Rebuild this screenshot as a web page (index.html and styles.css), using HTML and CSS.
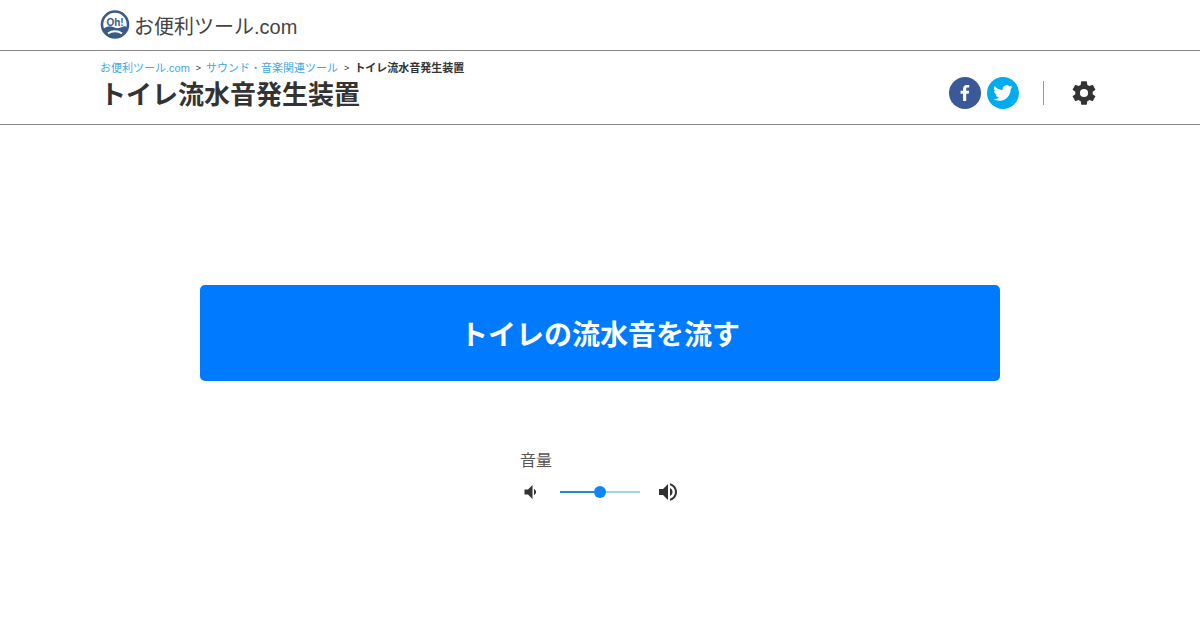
FILE: index.html
```html
<!DOCTYPE html>
<html lang="ja">
<head>
<meta charset="utf-8">
<title>トイレ流水音発生装置</title>
<link rel="stylesheet" href="styles.css">
</head>
<body>
<header class="site-header">
  <div class="wrap brand">
    <svg class="logo" width="30" height="30" viewBox="0 0 30 30" aria-hidden="true">
      <circle cx="15" cy="14.5" r="13" fill="#fff" stroke="#3a5a88" stroke-width="2.6"/>
      <path d="M3 19c4-3 7-3.500 10-2 3 1.500 6 1.500 9 0 2.500-1.200 4-1 5 .5-1 5-6 9.500-12 9.500S4.500 24 3 19z" fill="#3a5a88"/>
      <path d="M8 23.500c4-3 10-3 14 0" fill="none" stroke="#fff" stroke-width="1.800"/>
      <text x="15" y="15.500" class="logo-text">Oh!</text>
    </svg>
    <span class="brand-name">お便利ツール.com</span>
  </div>
</header>
<section class="title-bar">
  <div class="wrap title-inner">
    <div class="title-text">
      <nav class="crumbs">
        <a>お便利ツール.com</a><span class="sep">&gt;</span><a>サウンド・音楽関連ツール</a><span class="sep">&gt;</span><strong>トイレ流水音発生装置</strong>
      </nav>
      <h1>トイレ流水音発生装置</h1>
    </div>
    <div class="actions">
      <span class="social fb">
        <svg width="32" height="32" viewBox="0 0 32 32" aria-hidden="true"><path d="M17.200 24v-7.300h2.500l.4-2.900h-2.900v-1.800c0-.8.200-1.400 1.400-1.400h1.600V8c-.3 0-1.200-.1-2.300-.1-2.300 0-3.800 1.400-3.800 3.900v2h-2.500v2.900h2.500V24z" fill="#fff"/></svg>
      </span>
      <span class="social tw">
        <svg width="32" height="32" viewBox="0 0 32 32" aria-hidden="true"><path transform="translate(6.400 6.400) scale(.8)" d="M23.950 4.570a10 10 0 0 1-2.820.77 4.960 4.960 0 0 0 2.160-2.720 9.900 9.900 0 0 1-3.120 1.190 4.920 4.920 0 0 0-8.380 4.480A13.970 13.970 0 0 1 1.670 3.150a4.930 4.930 0 0 0 1.520 6.570 4.900 4.900 0 0 1-2.230-.62v.06a4.920 4.920 0 0 0 3.950 4.830 5 5 0 0 1-2.210.08 4.940 4.940 0 0 0 4.600 3.420A9.870 9.870 0 0 1 0 19.540a13.940 13.940 0 0 0 7.550 2.210c9.050 0 14-7.500 14-13.980 0-.21 0-.42-.02-.63a9.940 9.940 0 0 0 2.460-2.550z" fill="#fff"/></svg>
      </span>
      <span class="divider"></span>
      <svg class="gear" width="28" height="28" viewBox="0 0 24 24" aria-hidden="true"><path fill-rule="evenodd" d="M19.430 12.980c.04-.32.07-.64.07-.98s-.03-.66-.07-.98l2.110-1.650a.5.500 0 0 0 .12-.64l-2-3.460a.5.500 0 0 0-.61-.22l-2.490 1a7.300 7.300 0 0 0-1.690-.98l-.38-2.650A.49.490 0 0 0 14 2h-4a.49.490 0 0 0-.49.420l-.38 2.650c-.61.250-1.170.590-1.690.98l-2.490-1a.49.490 0 0 0-.61.220l-2 3.460a.49.490 0 0 0 .12.640l2.110 1.650c-.04.320-.07.650-.07.980s.03.660.07.980l-2.110 1.650a.5.500 0 0 0-.12.640l2 3.460c.12.220.39.300.61.220l2.490-1c.52.400 1.080.730 1.690.98l.38 2.650c.03.240.24.420.49.420h4c.25 0 .46-.18.490-.42l.38-2.650c.61-.25 1.170-.59 1.690-.98l2.490 1c.23.090.49 0 .61-.22l2-3.460a.5.500 0 0 0-.12-.64zM12 15.500a3.500 3.500 0 1 1 0-7 3.500 3.500 0 0 1 0 7z" fill="#333"/></svg>
    </div>
  </div>
</section>
<main class="content">
  <button class="play" type="button">トイレの流水音を流す</button>
  <div class="volume">
    <div class="volume-label">音量</div>
    <div class="volume-row">
      <svg width="24" height="24" viewBox="0 0 24 24" aria-hidden="true"><path d="M4.500 9.500v5h3.500l4.500 4.500V5L8 9.500z" fill="#333"/><path d="M14 9v6c1.300-.6 2-1.700 2-3s-.7-2.400-2-3z" fill="#333"/></svg>
      <div class="slider"><span class="thumb"></span></div>
      <svg width="24" height="24" viewBox="0 0 24 24" aria-hidden="true"><path d="M3 9v6h4l5 5V4L7 9z" fill="#333"/><path d="M14 8v8c1.500-.7 2.500-2.200 2.500-4S15.500 8.700 14 8z" fill="#333"/><path d="M14 3.200v2.100c2.900.9 5 3.500 5 6.700s-2.100 5.800-5 6.700v2.100c4-.9 7-4.500 7-8.800s-3-7.900-7-8.800z" fill="#333"/></svg>
    </div>
  </div>
</main>
</body>
</html>
```
FILE: styles.css
```css
* { box-sizing: border-box; }
html, body { margin: 0; padding: 0; }
body {
  width: 1200px;
  height: 630px;
  overflow: hidden;
  background: #fff;
  color: #333;
  font-family: "Liberation Sans", "Noto Sans CJK JP", sans-serif;
}
.wrap { width: 1000px; margin: 0 auto; }
.site-header { height: 51px; border-bottom: 1px solid #888; }
.brand { display: flex; align-items: center; height: 50px; gap: 4px; }
.logo { display: block; }
.logo-text { font: bold 10px "Liberation Sans", sans-serif; fill: #3a5a88; text-anchor: middle; }
.brand-name { font-size: 20px; color: #444; letter-spacing: 0; }
.title-bar { height: 74px; border-bottom: 1px solid #888; }
.title-inner { display: flex; justify-content: space-between; align-items: flex-start; }
.title-text { padding-top: 10px; }
.crumbs { display: flex; align-items: center; font-size: 11px; line-height: 14px; height: 14px; }
.crumbs a { color: #3ea8df; }
.crumbs strong { color: #333; font-weight: bold; }
.sep { margin: 0 5px 0 6px; font-size: 9px; color: #333; }
h1 { margin: 3px 0 0; font-size: 26px; line-height: 34px; font-weight: bold; color: #333; }
.actions { display: flex; align-items: center; height: 84px; margin-top: 0; height: 84px; }
.actions { padding-right: 0; height: 84px; }
.social { display: block; width: 32px; height: 32px; border-radius: 50%; margin-right: 6px; }
.social svg { display: block; }
.fb { background: #3b5998; }
.tw { background: #00aced; margin-right: 0; }
.divider { width: 1px; height: 24px; background: #999; margin: 0 26px 0 24px; }
.gear { display: block; margin-right: 2px; }
.content { display: flex; flex-direction: column; align-items: center; padding-top: 160px; }
.play {
  display: block;
  width: 800px;
  height: 96px;
  border: 0;
  border-radius: 5px;
  background: #007bff;
  color: #fff;
  font-family: inherit;
  font-size: 28px;
  font-weight: bold;
  letter-spacing: 0;
}
.volume { width: 160px; margin-top: 69px; }
.volume-label { font-size: 16px; line-height: 22px; color: #555; }
.volume-row { display: flex; align-items: center; justify-content: space-between; height: 24px; margin-top: 8px; }
.slider { position: relative; width: 80px; height: 2px; background: linear-gradient(to right, #1a8fc8 50%, #a8d0e8 50%); }
.thumb { position: absolute; left: 34px; top: -5px; width: 12px; height: 12px; border-radius: 50%; background: #0f86f5; }
```
